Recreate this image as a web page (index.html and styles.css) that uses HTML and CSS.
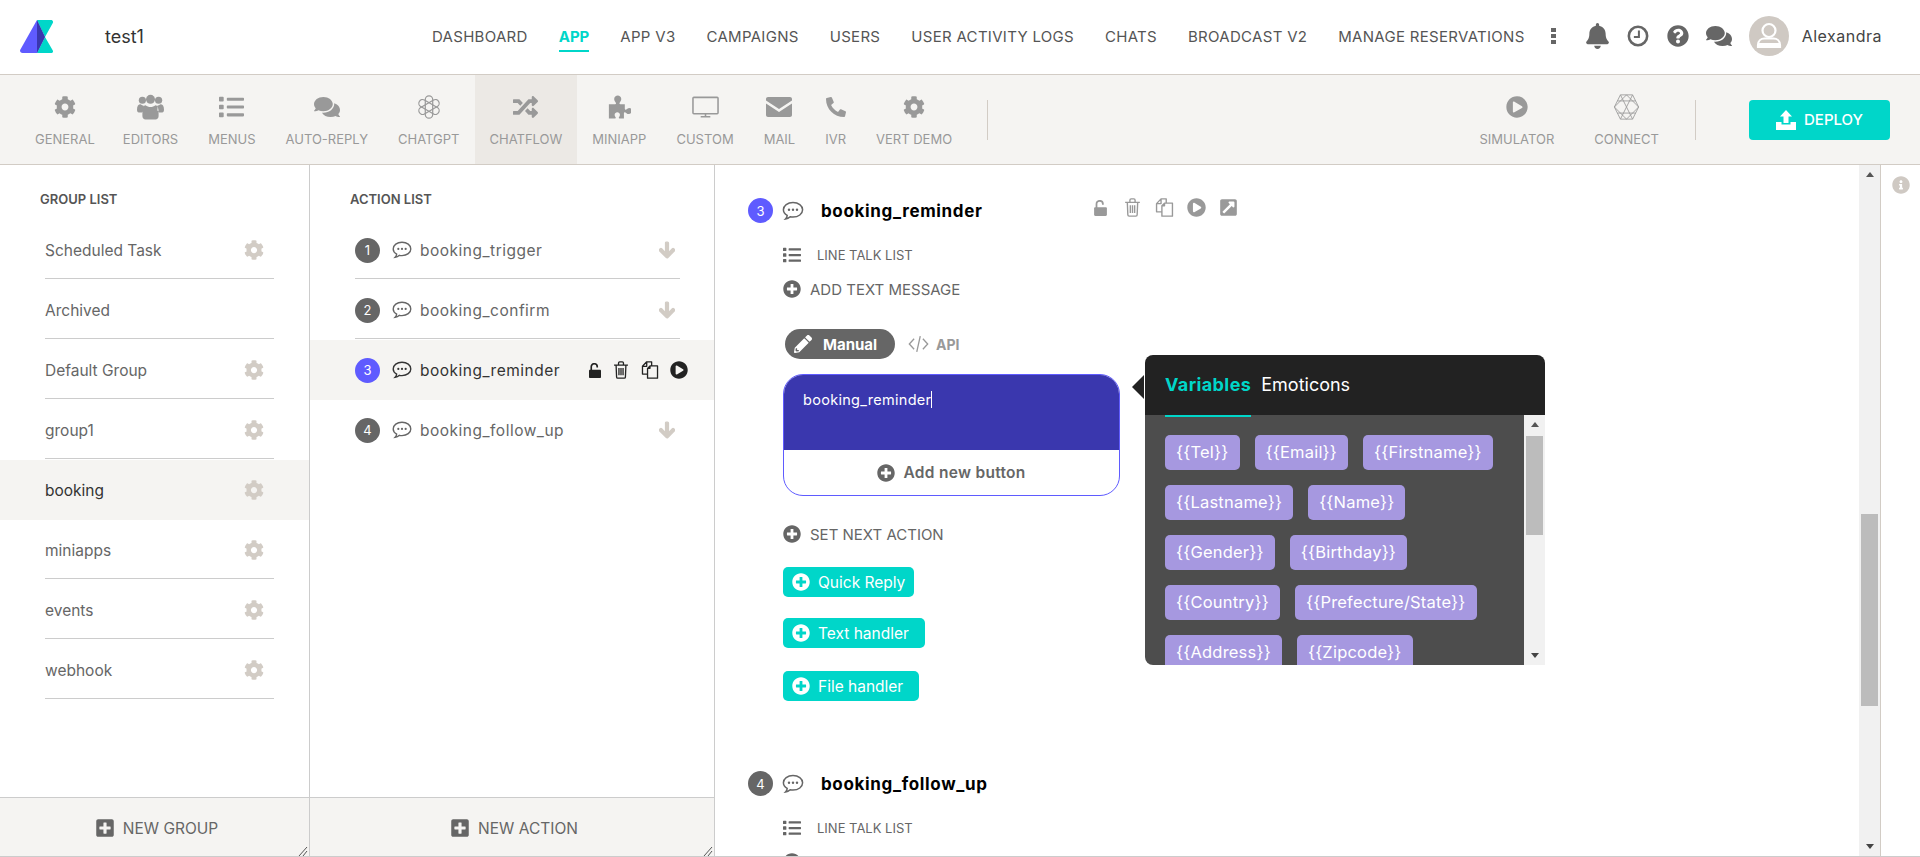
FILE: index.html
```html
<!DOCTYPE html>
<html>
<head>
<meta charset="utf-8" />
<title>Chatflow</title>
<link rel="stylesheet" href="styles.css">
</head>
<body>
<svg class="defs" width="0" height="0">
  <symbol id="i-cog" viewBox="0 0 512 512"><path d="M487.4 315.7l-42.6-24.6c4.3-23.2 4.3-47 0-70.2l42.6-24.6c4.9-2.8 7.1-8.6 5.5-14-11.1-35.6-30-67.8-54.7-94.6-3.8-4.1-10-5.1-14.8-2.3L380.8 110c-17.9-15.4-38.5-27.3-60.8-35.1V25.8c0-5.6-3.9-10.5-9.4-11.7-36.7-8.2-74.3-7.8-109.2 0-5.5 1.2-9.4 6.1-9.4 11.7V75c-22.2 7.9-42.8 19.8-60.8 35.1L88.7 85.5c-4.9-2.8-11-1.9-14.8 2.3-24.7 26.7-43.6 58.9-54.7 94.6-1.7 5.4.6 11.2 5.5 14L67.3 221c-4.3 23.2-4.3 47 0 70.2l-42.6 24.6c-4.9 2.8-7.1 8.6-5.5 14 11.1 35.6 30 67.8 54.7 94.6 3.8 4.1 10 5.1 14.8 2.3l42.6-24.6c17.9 15.4 38.5 27.3 60.8 35.1v49.2c0 5.6 3.9 10.5 9.4 11.7 36.7 8.2 74.3 7.8 109.2 0 5.5-1.2 9.4-6.1 9.4-11.7v-49.2c22.2-7.9 42.8-19.8 60.8-35.1l42.6 24.6c4.9 2.8 11 1.9 14.8-2.3 24.7-26.7 43.6-58.9 54.7-94.6 1.5-5.5-.7-11.3-5.6-14.1zM256 336c-44.1 0-80-35.9-80-80s35.9-80 80-80 80 35.9 80 80-35.9 80-80 80z"/></symbol>
  <symbol id="i-plus" viewBox="0 0 512 512"><path d="M256 8C119 8 8 119 8 256s111 248 248 248 248-111 248-248S393 8 256 8zm144 276c0 6.6-5.4 12-12 12h-92v92c0 6.6-5.4 12-12 12h-56c-6.6 0-12-5.4-12-12v-92h-92c-6.6 0-12-5.4-12-12v-56c0-6.6 5.4-12 12-12h92v-92c0-6.6 5.4-12 12-12h56c6.6 0 12 5.4 12 12v92h92c6.6 0 12 5.4 12 12v56z"/></symbol>
  <symbol id="i-plus-sq" viewBox="0 0 448 512"><path d="M400 32H48C21.5 32 0 53.5 0 80v352c0 26.5 21.5 48 48 48h352c26.5 0 48-21.5 48-48V80c0-26.5-21.5-48-48-48zm-32 252c0 6.6-5.4 12-12 12h-92v92c0 6.6-5.4 12-12 12h-56c-6.6 0-12-5.4-12-12v-92H92c-6.6 0-12-5.4-12-12v-56c0-6.6 5.4-12 12-12h92v-92c0-6.6 5.4-12 12-12h56c6.6 0 12 5.4 12 12v92h92c6.6 0 12 5.4 12 12v56z"/></symbol>
  <symbol id="i-help" viewBox="0 0 512 512"><path d="M504 256c0 136.997-111.043 248-248 248S8 392.997 8 256C8 119.083 119.043 8 256 8s248 111.083 248 248zM262.655 90c-54.497 0-89.255 22.957-116.549 63.758-3.536 5.286-2.353 12.415 2.715 16.258l34.699 26.31c5.205 3.947 12.621 3.008 16.665-2.122 17.864-22.658 30.113-35.797 57.303-35.797 20.429 0 45.698 13.148 45.698 32.958 0 14.976-12.363 22.667-32.534 33.976C247.128 238.528 216 254.941 216 296v4c0 6.627 5.373 12 12 12h56c6.627 0 12-5.373 12-12v-1.333c0-28.462 83.186-29.647 83.186-106.667 0-58.002-60.165-102-116.531-102zM256 338c-25.365 0-46 20.635-46 46 0 25.364 20.635 46 46 46s46-20.636 46-46c0-25.365-20.635-46-46-46z"/></symbol>
  <symbol id="i-play" viewBox="0 0 512 512"><path d="M256 8C119 8 8 119 8 256s111 248 248 248 248-111 248-248S393 8 256 8zm115.7 272l-176 101c-15.8 8.8-35.7-2.5-35.7-21V152c0-18.4 19.8-29.8 35.7-21l176 107c16.4 9.2 16.4 32.9 0 42z"/></symbol>
  <symbol id="i-bell" viewBox="0 0 448 512"><path d="M224 512c35.32 0 63.97-28.65 63.97-64H160.03c0 35.35 28.65 64 63.97 64zm215.39-149.71c-19.32-20.76-55.47-51.99-55.47-154.29 0-77.7-54.48-139.9-127.94-155.16V32c0-17.67-14.32-32-31.98-32s-31.98 14.33-31.98 32v20.84C118.56 68.1 64.08 130.3 64.08 208c0 102.3-36.15 133.53-55.47 154.29-6 6.45-8.66 14.16-8.61 21.71.11 16.4 12.98 32 32.1 32h383.8c19.12 0 32-15.6 32.1-32 .05-7.55-2.61-15.27-8.61-21.71z"/></symbol>
  <symbol id="i-comments" viewBox="0 0 576 512"><path d="M416 192c0-88.4-93.1-160-208-160S0 103.6 0 192c0 34.3 14.1 65.9 38 92-13.4 30.2-35.5 54.2-35.8 54.5-2.2 2.3-2.8 5.7-1.5 8.7S4.8 352 8 352c36.6 0 66.9-12.3 88.7-25 32.2 15.7 70.3 25 111.3 25 114.9 0 208-71.6 208-160zm122 220c23.9-26 38-57.7 38-92 0-66.9-53.5-124.2-129.3-148.1.9 6.6 1.3 13.3 1.3 20.1 0 105.9-107.7 192-240 192-10.8 0-21.3-.8-31.7-1.9C207.8 439.6 281.8 480 368 480c41 0 79.1-9.2 111.3-25 21.8 12.7 52.1 25 88.7 25 3.2 0 6.1-1.9 7.3-4.8 1.3-2.9.7-6.3-1.5-8.7-.3-.3-22.4-24.2-35.8-54.5z"/></symbol>
  <symbol id="i-list" viewBox="0 0 512 512"><path d="M80 368H16a16 16 0 0 0-16 16v64a16 16 0 0 0 16 16h64a16 16 0 0 0 16-16v-64a16 16 0 0 0-16-16zm0-320H16A16 16 0 0 0 0 64v64a16 16 0 0 0 16 16h64a16 16 0 0 0 16-16V64a16 16 0 0 0-16-16zm0 160H16a16 16 0 0 0-16 16v64a16 16 0 0 0 16 16h64a16 16 0 0 0 16-16v-64a16 16 0 0 0-16-16zm416 176H176a16 16 0 0 0-16 16v32a16 16 0 0 0 16 16h320a16 16 0 0 0 16-16v-32a16 16 0 0 0-16-16zm0-320H176a16 16 0 0 0-16 16v32a16 16 0 0 0 16 16h320a16 16 0 0 0 16-16V80a16 16 0 0 0-16-16zm0 160H176a16 16 0 0 0-16 16v32a16 16 0 0 0 16 16h320a16 16 0 0 0 16-16v-32a16 16 0 0 0-16-16z"/></symbol>
  <symbol id="i-random" viewBox="0 0 512 512"><path d="M504.971 359.029c9.373 9.373 9.373 24.569 0 33.941l-80 79.984c-15.01 15.01-40.971 4.49-40.971-16.971V416h-58.785a12.004 12.004 0 0 1-8.773-3.812l-70.556-75.596 53.333-57.143L352 336h32v-39.981c0-21.438 25.943-31.998 40.971-16.971l80 79.981zM12 176h84l52.781 56.551 53.333-57.143-70.556-75.596A11.999 11.999 0 0 0 122.785 96H12c-6.627 0-12 5.373-12 12v56c0 6.627 5.373 12 12 12zm372 0v39.984c0 21.46 25.961 31.98 40.971 16.971l80-79.984c9.373-9.373 9.373-24.569 0-33.941l-80-79.981C409.943 24.021 384 34.582 384 56.019V96h-58.785a12.004 12.004 0 0 0-8.773 3.812L96 336H12c-6.627 0-12 5.373-12 12v56c0 6.627 5.373 12 12 12h110.785c3.326 0 6.503-1.381 8.773-3.812L352 176h32z"/></symbol>
  <symbol id="i-phone" viewBox="0 0 512 512"><path transform="translate(512 0) scale(-1 1)" d="M493.4 24.6l-104-24c-11.3-2.6-22.9 3.3-27.5 13.9l-48 112c-4.2 9.8-1.4 21.3 6.9 28l60.6 49.6c-36 76.7-98.9 140.5-177.2 177.2l-49.6-60.6c-6.8-8.3-18.2-11.1-28-6.9l-112 48C3.9 366.5-2 378.1.6 389.4l24 104C27.1 504.2 36.7 512 48 512c256.1 0 464-207.5 464-464 0-11.2-7.7-20.9-18.6-23.4z"/></symbol>
  <symbol id="i-info" viewBox="0 0 512 512"><path d="M256 8C119.043 8 8 119.083 8 256c0 136.997 111.043 248 248 248s248-111.003 248-248C504 119.083 392.957 8 256 8zm0 110c23.196 0 42 18.804 42 42s-18.804 42-42 42-42-18.804-42-42 18.804-42 42-42zm56 254c0 6.627-5.373 12-12 12h-88c-6.627 0-12-5.373-12-12v-24c0-6.627 5.373-12 12-12h12v-64h-12c-6.627 0-12-5.373-12-12v-24c0-6.627 5.373-12 12-12h64c6.627 0 12 5.373 12 12v100h12c6.627 0 12 5.373 12 12v24z"/></symbol>
  <symbol id="i-down" viewBox="0 0 448 512"><path d="M413.1 222.5l22.2 22.2c9.4 9.4 9.4 24.6 0 33.9L241 473c-9.4 9.4-24.6 9.4-33.9 0L12.7 278.6c-9.4-9.4-9.4-24.6 0-33.9l22.2-22.2c9.5-9.5 25-9.3 34.3.4L184 343.4V56c0-13.3 10.7-24 24-24h32c13.3 0 24 10.7 24 24v287.4l114.8-120.5c9.3-9.8 24.8-10 34.3-.4z"/></symbol>
  <symbol id="i-ext" viewBox="0 0 448 512"><path d="M448 80v352c0 26.51-21.49 48-48 48H48c-26.51 0-48-21.49-48-48V80c0-26.51 21.49-48 48-48h352c26.51 0 48 21.49 48 48zm-88 16H248.029c-21.313 0-32.08 25.861-16.971 40.971l31.984 31.987L67.515 364.485c-4.686 4.686-4.686 12.284 0 16.971l31.029 31.029c4.687 4.686 12.285 4.686 16.971 0l195.526-195.526 31.988 31.991C357.058 263.977 384 253.425 384 231.979V120c0-13.255-10.745-24-24-24z"/></symbol>
  <symbol id="i-pencil" viewBox="0 0 512 512"><path d="M497.9 142.1l-46.1 46.1c-4.7 4.7-12.3 4.7-17 0l-111-111c-4.7-4.7-4.7-12.3 0-17l46.1-46.1c18.7-18.7 49.1-18.7 67.9 0l60.1 60.1c18.8 18.7 18.8 49.1 0 67.9zM284.2 99.8L21.6 362.4.4 483.9c-2.9 16.4 11.4 30.6 27.8 27.8l121.5-21.3 262.6-262.6c4.7-4.7 4.7-12.3 0-17l-111-111c-4.8-4.7-12.4-4.7-17.1 0zM88 424h48v36.3l-64.5 11.3-31.1-31.1L51.7 376H88v48z"/></symbol>
  <symbol id="i-chat" viewBox="0 0 24 24"><path fill="none" stroke="currentColor" stroke-width="1.5" d="M12 3.5c5.4 0 9.6 3.2 9.6 7.3s-4.2 7.3-9.6 7.3c-1 0-1.9-.1-2.8-.3-1.3 1.2-3 2-4.7 2.2 1-1 1.6-2.2 1.7-3.6-2.3-1.3-3.8-3.4-3.8-5.6 0-4.1 4.2-7.3 9.6-7.3z"/><circle cx="8" cy="10.8" r="1.2" fill="currentColor"/><circle cx="12" cy="10.8" r="1.2" fill="currentColor"/><circle cx="16" cy="10.8" r="1.2" fill="currentColor"/></symbol>
  <symbol id="i-trash" viewBox="0 0 20 22"><path fill="none" stroke="currentColor" stroke-width="1.6" d="M1.5 5h17M4 5l.6 14.5c0 .9.7 1.5 1.5 1.5h7.800c.8 0 1.500-.6 1.500-1.500L16 5M7 5V2.500C7 1.700 7.600 1 8.400 1h3.200c.8 0 1.400.7 1.400 1.500V5M7.500 8.500v9M10 8.500v9M12.500 8.500v9"/></symbol>
  <symbol id="i-copy" viewBox="0 0 22 22"><path fill="none" stroke="currentColor" stroke-width="1.600" stroke-linejoin="round" d="M8 16H1.800V6.500L7 1h6v5M8 16V9l3-3h9.200v15H8zM7 1v5.500H1.800M11 6v3H8"/></symbol>
  <symbol id="i-unlock" viewBox="0 0 16 20"><path d="M1.500 9h13c.8 0 1.500.7 1.500 1.500v8c0 .8-.7 1.500-1.500 1.500h-13C.7 20 0 19.300 0 18.500v-8C0 9.700.7 9 1.500 9z"/><path fill="none" stroke="currentColor" stroke-width="2.200" d="M3 10V5c0-2.300 1.700-4 4-4s4 1.700 4 4v1"/></symbol>
  <symbol id="i-code" viewBox="0 0 24 20"><path fill="none" stroke="currentColor" stroke-width="1.500" d="M7 4L1.500 10 7 16M17 4l5.500 6-5.500 6M14 1l-4 18"/></symbol>
  <symbol id="i-clock" viewBox="0 0 24 24"><circle cx="12" cy="12" r="10" fill="none" stroke="currentColor" stroke-width="2.800"/><path fill="none" stroke="currentColor" stroke-width="2.200" d="M13 6v7H7.500"/></symbol>
  <symbol id="i-users" viewBox="0 0 30 28"><circle cx="6" cy="6.500" r="4"/><circle cx="24" cy="6.500" r="4"/><circle cx="15" cy="5.500" r="5"/><path d="M0 17c0-4 1.500-6 4-6 1 1 2.500 1.500 3.500 1.500-.5 1.500-.5 3 0 5.500-1 .5-1.500 1-2 2H2c-1.300 0-2-1.300-2-3zM30 17c0-4-1.500-6-4-6-1 1-2.500 1.500-3.500 1.500.5 1.500.5 3 0 5.500 1 .5 1.500 1 2 2H28c1.300 0 2-1.300 2-3zM9.500 12c1.500 1.300 3.500 2 5.500 2s4-.7 5.500-2c2.500.3 3.500 3 3.500 8v4c0 2.200-1.500 4-3.500 4h-11C7.500 28 6 26.200 6 24v-4c0-5 1-7.700 3.500-8z"/></symbol>
  <symbol id="i-puzzle" viewBox="0 0 26 28"><path d="M1 11h7c1 0 1.300-.8.800-1.700C7.900 7.800 7 6.800 7 5c0-2.500 2-4 4-4s4 1.500 4 4c0 1.800-1 2.800-1.800 4.300-.5.900-.2 1.700.8 1.700h5v5c0 1 .8 1.300 1.700.8 1.200-.8 2-1.800 3.300-1.800 2 0 3 1.800 3 3.500S25 22 23 22c-1.300 0-2.100-1-3.300-1.800-.9-.5-1.700-.2-1.700.8v6h-5c-.8 0-1-.8-.6-1.500.5-1 1.100-1.500 1.100-2.800 0-1.700-1.500-2.700-3-2.700s-3 1-3 2.700c0 1.300.6 1.800 1.100 2.800.4.700.2 1.500-.6 1.500H1z"/></symbol>
  <symbol id="i-mail" viewBox="0 0 26 20"><path d="M2 0h22c1.100 0 2 .9 2 2v1.500L13 12 0 3.500V2C0 .9.900 0 2 0zM0 6.500L13 15l13-8.500V18c0 1.100-.9 2-2 2H2c-1.100 0-2-.9-2-2z"/></symbol>
  <symbol id="i-screen" viewBox="0 0 28 22"><path fill="none" stroke="currentColor" stroke-width="1.600" d="M2 1h24c.6 0 1 .4 1 1v15c0 .6-.4 1-1 1H2c-.6 0-1-.4-1-1V2c0-.6.4-1 1-1zM14 18v3M9 21.200h10"/></symbol>
  <symbol id="i-gpt" viewBox="0 0 28 28"><g fill="none" stroke="currentColor" stroke-width="1.300"><rect x="10" y="2" width="8" height="24" rx="4"/><rect x="10" y="2" width="8" height="24" rx="4" transform="rotate(60 14 14)"/><rect x="10" y="2" width="8" height="24" rx="4" transform="rotate(120 14 14)"/></g></symbol>
  <symbol id="i-connect" viewBox="0 0 30 30"><g fill="none" stroke="currentColor" stroke-width="1"><path d="M8 1h14l7 14-7 14H8L1 15z"/><path d="M8 1l14 28M22 1L8 29M1 15l14-14 14 14-14 14zM4.500 8h21M4.500 22h21"/></g></symbol>
  <symbol id="i-upload" viewBox="0 0 20 20"><path d="M10 0l6 6.500h-3.500V13h-5V6.500H4zM0 12h5.500v2.500h9V12H20v8H0z"/></symbol>
  <symbol id="i-user" viewBox="0 0 40 40"><circle cx="20" cy="14.500" r="6.500" fill="none" stroke="#fff" stroke-width="2.200"/><path fill="none" stroke="#fff" stroke-width="2.200" d="M9 32v-3c0-4 3-6.500 6.500-6.500h9c3.500 0 6.500 2.500 6.500 6.500v3"/><path fill="#fff" d="M9 27h22v5H9z"/></symbol>
  <symbol id="i-grip" viewBox="0 0 10 10"><path fill="none" stroke="#555" stroke-width="1" d="M1 10l8-9M5 10l4-5"/></symbol>
</svg>

<header class="topbar">
  <svg class="logo" viewBox="0 0 33 33" width="33" height="33">
    <path fill="#5f5bff" d="M17 0L.4 29.500C-.6 31.300.5 33 2.500 33H17l8-16z"/>
    <path fill="#00d6c9" d="M17 0h14c1.600 0 2.500 1.500 1.800 3L25 17l7.800 13.500c.7 1.200-.2 2.500-1.800 2.500H17l8-16z"/>
    <path fill="#3a37ae" d="M17 0l8 17-8 16z"/>
  </svg>
  <span class="app-name">test1</span>
  <nav class="topnav">
    <a>DASHBOARD</a><a class="on">APP</a><a>APP V3</a><a>CAMPAIGNS</a><a>USERS</a><a>USER ACTIVITY LOGS</a><a>CHATS</a><a>BROADCAST V2</a><a>MANAGE RESERVATIONS</a>
  </nav>
  <div class="kebab"><i></i><i></i><i></i></div>
  <svg class="ico-bell"><use href="#i-bell"/></svg>
  <svg class="ico-top"><use href="#i-clock"/></svg>
  <svg class="ico-top"><use href="#i-help"/></svg>
  <svg class="ico-chats"><use href="#i-comments"/></svg>
  <div class="avatar"><svg width="40" height="40"><use href="#i-user"/></svg></div>
  <span class="username">Alexandra</span>
</header>

<div class="toolbar">
  <a class="tab first"><svg class="w22"><use href="#i-cog"/></svg><span>GENERAL</span></a>
  <a class="tab"><svg class="w27"><use href="#i-users"/></svg><span>EDITORS</span></a>
  <a class="tab"><svg class="w25"><use href="#i-list"/></svg><span>MENUS</span></a>
  <a class="tab"><svg class="w26"><use href="#i-comments"/></svg><span>AUTO-REPLY</span></a>
  <a class="tab"><svg class="w26"><use href="#i-gpt"/></svg><span>CHATGPT</span></a>
  <a class="tab active"><svg class="w25"><use href="#i-random"/></svg><span>CHATFLOW</span></a>
  <a class="tab"><svg class="w23"><use href="#i-puzzle"/></svg><span>MINIAPP</span></a>
  <a class="tab"><svg class="w27"><use href="#i-screen"/></svg><span>CUSTOM</span></a>
  <a class="tab"><svg class="w26"><use href="#i-mail"/></svg><span>MAIL</span></a>
  <a class="tab"><svg class="w20"><use href="#i-phone"/></svg><span>IVR</span></a>
  <a class="tab"><svg class="w22"><use href="#i-cog"/></svg><span>VERT DEMO</span></a>
  <div class="vline"></div>
  <div class="tool-right">
    <a class="tab wide"><svg class="w22"><use href="#i-play"/></svg><span>SIMULATOR</span></a>
    <a class="tab wide"><svg class="w27"><use href="#i-connect"/></svg><span>CONNECT</span></a>
    <div class="vline"></div>
    <button class="deploy"><svg width="20" height="20"><use href="#i-upload"/></svg>DEPLOY</button>
  </div>
</div>

<div class="workspace">
  <section class="col col-group">
    <h4>GROUP LIST</h4>
    <ul class="rows">
      <li><span class="name">Scheduled Task</span><svg class="gear"><use href="#i-cog"/></svg></li>
      <li><span class="name">Archived</span></li>
      <li><span class="name">Default Group</span><svg class="gear"><use href="#i-cog"/></svg></li>
      <li><span class="name">group1</span><svg class="gear"><use href="#i-cog"/></svg></li>
      <li class="sel"><span class="name">booking</span><svg class="gear"><use href="#i-cog"/></svg></li>
      <li><span class="name">miniapps</span><svg class="gear"><use href="#i-cog"/></svg></li>
      <li><span class="name">events</span><svg class="gear"><use href="#i-cog"/></svg></li>
      <li><span class="name">webhook</span><svg class="gear"><use href="#i-cog"/></svg></li>
    </ul>
    <div class="col-foot"><svg width="18" height="20"><use href="#i-plus-sq"/></svg>NEW GROUP<svg class="grip"><use href="#i-grip"/></svg></div>
  </section>

  <section class="col col-action">
    <h4>ACTION LIST</h4>
    <ul class="rows">
      <li><b class="num">1</b><svg class="chat"><use href="#i-chat"/></svg><span class="name">booking_trigger</span><svg class="arrow"><use href="#i-down"/></svg></li>
      <li><b class="num">2</b><svg class="chat"><use href="#i-chat"/></svg><span class="name">booking_confirm</span><svg class="arrow"><use href="#i-down"/></svg></li>
      <li class="sel"><b class="num cur">3</b><svg class="chat"><use href="#i-chat"/></svg><span class="name">booking_reminder</span>
        <span class="row-tools">
          <svg class="rt-lock"><use href="#i-unlock"/></svg><svg class="rt"><use href="#i-trash"/></svg><svg class="rt"><use href="#i-copy"/></svg><svg class="rt"><use href="#i-play"/></svg>
        </span>
      </li>
      <li><b class="num">4</b><svg class="chat"><use href="#i-chat"/></svg><span class="name">booking_follow_up</span><svg class="arrow"><use href="#i-down"/></svg></li>
    </ul>
    <div class="col-foot"><svg width="18" height="20"><use href="#i-plus-sq"/></svg>NEW ACTION<svg class="grip"><use href="#i-grip"/></svg></div>
  </section>

  <main class="main">
    <div class="canvas">
      <div class="block-head">
        <b class="num cur">3</b><svg class="chat big"><use href="#i-chat"/></svg><span class="title">booking_reminder</span>
        <span class="head-tools">
          <svg class="ht-lock"><use href="#i-unlock"/></svg><svg class="ht"><use href="#i-trash"/></svg><svg class="ht"><use href="#i-copy"/></svg><svg class="ht"><use href="#i-play"/></svg><svg class="ht"><use href="#i-ext"/></svg>
        </span>
      </div>
      <div class="talk-list"><svg width="18" height="18"><use href="#i-list"/></svg>LINE TALK LIST</div>
      <div class="add-line"><svg width="18" height="18"><use href="#i-plus"/></svg>ADD TEXT MESSAGE</div>
      <div class="mode">
        <span class="pill"><svg width="18" height="18"><use href="#i-pencil"/></svg>Manual</span>
        <span class="api"><svg width="21" height="18"><use href="#i-code"/></svg>API</span>
      </div>
      <div class="editor">
        <div class="bubble"><span class="typed">booking_reminder</span></div>
        <div class="add-btn"><svg width="18" height="18"><use href="#i-plus"/></svg>Add new button</div>
      </div>
      <div class="add-line next"><svg width="18" height="18"><use href="#i-plus"/></svg>SET NEXT ACTION</div>
      <a class="teal qr"><svg width="18" height="18"><use href="#i-plus"/></svg>Quick Reply</a>
      <a class="teal th"><svg width="18" height="18"><use href="#i-plus"/></svg>Text handler</a>
      <a class="teal fh"><svg width="18" height="18"><use href="#i-plus"/></svg>File handler</a>

      <div class="block-head second">
        <b class="num">4</b><svg class="chat big"><use href="#i-chat"/></svg><span class="title">booking_follow_up</span>
      </div>
      <div class="talk-list"><svg width="18" height="18"><use href="#i-list"/></svg>LINE TALK LIST</div>
      <div class="add-line"><svg width="18" height="18"><use href="#i-plus"/></svg></div>

      <div class="popover">
        <div class="pop-head">
          <span class="pop-tab on">Variables</span><span class="pop-tab">Emoticons</span>
        </div>
        <div class="pop-body">
          <div class="chips">
            <span>{{Tel}}</span><span>{{Email}}</span><span>{{Firstname}}</span><span>{{Lastname}}</span><span>{{Name}}</span><span>{{Gender}}</span><span>{{Birthday}}</span><span>{{Country}}</span><span>{{Prefecture/State}}</span><span>{{Address}}</span><span>{{Zipcode}}</span>
          </div>
          <div class="pop-bar"><i class="up"></i><i class="thumb"></i><i class="dn"></i></div>
        </div>
      </div>
    </div>
    <div class="main-bar"><i class="up"></i><i class="thumb"></i><i class="dn"></i></div>
  </main>

  <aside class="side"><svg width="18" height="18"><use href="#i-info"/></svg></aside>
</div>
</body>
</html>
```

FILE: styles.css
```css
* {
    box-sizing: border-box;
}
html, body {
    margin: 0;
    height: 100%;
    overflow: hidden;
}
body {
    display: flex;
    flex-direction: column;
    font-family: "Inter", "Noto Sans", sans-serif;
    color: #666;
    background: #fff;
}
svg {
    fill: currentColor;
    flex: none;
    display: block;
}
.defs {
    position: absolute;
}
ul {
    list-style: none;
    margin: 0;
    padding: 0;
}

/* top bar */
.topbar {
    height: 75px;
    flex: none;
    display: flex;
    align-items: center;
    padding: 0 38px 2px 20px;
    border-bottom: 1px solid #d2ccc5;
}
.app-name {
    margin-left: 52px;
    font-size: 18px;
    color: #333;
}
.topnav {
    margin-left: auto;
    margin-top: 2px;
    display: flex;
    gap: 31px;
    font-size: 15px;
    letter-spacing: .3px;
    color: #555;
}
.topnav a {
    padding: 5px 0 4px;
    border-bottom: 2px solid transparent;
}
.topnav a.on {
    color: #00d6c9;
    font-weight: 700;
    letter-spacing: 0;
    border-bottom-color: #00d6c9;
}
.kebab {
    margin-left: 26px;
    display: flex;
    flex-direction: column;
    gap: 2px;
    width: 5px;
}
.kebab i {
    height: 4px;
    background: #666;
    display: block;
}
.ico-bell {
    width: 23px;
    height: 26px;
    margin-left: 30px;
}
.ico-top {
    width: 22px;
    height: 22px;
    margin-left: 18px;
}
.ico-chats {
    width: 26px;
    height: 24px;
    margin-left: 17px;
}
.avatar {
    width: 40px;
    height: 40px;
    border-radius: 50%;
    overflow: hidden;
    background: #cfc9c3;
    margin-left: 17px;
}
.username {
    margin-left: 13px;
    font-size: 16px;
    letter-spacing: .5px;
    color: #444;
}

/* app toolbar */
.toolbar {
    height: 90px;
    flex: none;
    display: flex;
    align-items: center;
    padding-left: 20px;
    background: #f5f4f2;
    border-bottom: 1px solid #d2ccc5;
    color: #999;
}
.tab {
    height: 89px;
    padding: 0 15px;
    display: flex;
    flex-direction: column;
    align-items: center;
    font-size: 13px;
    color: #999;
}
.tab.first {
    margin-right: -2px;
}
.tab svg {
    height: 26px;
    margin-top: 19px;
}
.tab span {
    margin-top: auto;
    padding-bottom: 17px;
}
.tab.active {
    background: #ece9e5;
}
.w20 { width: 20px; }
.w22 { width: 22px; }
.w23 { width: 23px; }
.w25 { width: 25px; }
.w26 { width: 26px; }
.w27 { width: 27px; }
.vline {
    width: 1px;
    height: 40px;
    background: #d2ccc5;
    margin-left: 20px;
}
.tool-right {
    margin-left: auto;
    display: flex;
    align-items: center;
    padding-right: 30px;
}
.tab.wide {
    padding: 0 20px;
}
.tool-right .vline {
    margin-left: 16px;
}
.deploy {
    width: 141px;
    height: 40px;
    margin-left: 53px;
    background: #00d6c9;
    color: #fff;
    border: 0;
    border-radius: 4px;
    font: 500 15px "Inter", sans-serif;
    display: flex;
    align-items: center;
    justify-content: center;
    gap: 8px;
}

/* panels */
.workspace {
    flex: 1;
    min-height: 0;
    display: flex;
    border-bottom: 1px solid #ccc;
}
.col {
    display: flex;
    flex-direction: column;
    border-right: 1px solid #ccc;
    position: relative;
}
.col-group {
    width: 310px;
    flex: none;
}
.col-action {
    width: 405px;
    flex: none;
}
.col h4 {
    margin: 0;
    padding: 26px 0 0 40px;
    font-size: 13px;
    font-weight: 600;
    line-height: 17px;
    height: 55px;
    color: #555;
}
.rows {
    flex: 1;
}
.rows li {
    height: 60px;
    padding: 0 35px 0 45px;
    display: flex;
    align-items: center;
    position: relative;
    font-size: 15.5px;
    color: #666;
}
.rows li::after {
    content: "";
    position: absolute;
    left: 45px;
    right: 35px;
    bottom: 1px;
    border-bottom: 1px solid #ccc;
}
.rows li.sel {
    background: #f5f4f2;
    color: #333;
}
.rows li.sel::after,
.col-action .rows li:last-child::after {
    display: none;
}
.gear {
    width: 20px;
    height: 20px;
    margin-left: auto;
    margin-right: 10px;
    color: #d2ccc5;
}
.col-action .rows li {
    padding: 0 34px 0 45px;
    letter-spacing: .5px;
}
.col-action .rows li::after {
    right: 34px;
}
.num {
    width: 25px;
    height: 25px;
    border-radius: 50%;
    background: #666;
    color: #fff;
    font-size: 13px;
    font-weight: 400;
    letter-spacing: 0;
    display: flex;
    align-items: center;
    justify-content: center;
    flex: none;
}
.num.cur {
    background: #5f5bff;
}
.chat {
    width: 22px;
    height: 22px;
    margin: 0 7px 0 11px;
    color: #666;
}
.sel .chat {
    color: #333;
}
.arrow {
    width: 16px;
    height: 18px;
    margin-left: auto;
    margin-right: 5px;
    color: #d2ccc5;
    stroke: currentColor;
    stroke-width: 40px;
}
.row-tools {
    margin-left: auto;
    margin-right: -8px;
    display: flex;
    align-items: center;
    gap: 11px;
    color: #222;
}
.rt-lock {
    width: 12px;
    height: 15px;
}
.rt {
    width: 18px;
    height: 18px;
}
.col-foot {
    height: 59px;
    flex: none;
    background: #f5f4f2;
    border-top: 1px solid #ccc;
    display: flex;
    align-items: center;
    justify-content: center;
    gap: 9px;
    padding: 2px 0 0 5px;
    font-size: 15.5px;
    color: #666;
    position: relative;
}
.grip {
    position: absolute;
    right: 1px;
    bottom: 0;
    width: 10px;
    height: 10px;
}

/* main canvas */
.main {
    flex: 1;
    min-width: 0;
    display: flex;
}
.canvas {
    flex: 1;
    position: relative;
    overflow: hidden;
    padding: 33px 0 0 68px;
}
.block-head {
    height: 25px;
    margin-left: -35px;
    display: flex;
    align-items: center;
}
.block-head.second {
    margin-top: 70px;
}
.chat.big {
    width: 24px;
    height: 24px;
    margin: 0 16px 0 8px;
}
.title {
    font-size: 17px;
    font-weight: 700;
    color: #000;
    letter-spacing: .65px;
}
.head-tools {
    margin-left: 111px;
    margin-top: -6px;
    display: flex;
    align-items: center;
    gap: 13px;
    color: #999;
}
.ht-lock {
    width: 13px;
    height: 16px;
    margin-right: 3px;
}
.ht {
    width: 19px;
    height: 19px;
}
.talk-list {
    margin-top: 22px;
    height: 20px;
    display: flex;
    align-items: center;
    gap: 16px;
    font-size: 13px;
    color: #666;
}
.add-line {
    margin-top: 14px;
    height: 20px;
    display: flex;
    align-items: center;
    gap: 9px;
    font-size: 15px;
    color: #666;
}
.mode {
    margin-top: 30px;
    height: 30px;
    display: flex;
    align-items: center;
    padding-left: 2px;
}
.pill {
    width: 110px;
    height: 30px;
    border-radius: 15px;
    background: #666;
    color: #fff;
    font-size: 15px;
    font-weight: 700;
    display: flex;
    align-items: center;
    gap: 11px;
    padding-left: 9px;
}
.api {
    margin-left: 13px;
    display: flex;
    align-items: center;
    gap: 7px;
    font-size: 14px;
    font-weight: 700;
    color: #999;
}
.editor {
    width: 337px;
    height: 122px;
    margin-top: 15px;
    border: 1px solid #5f5bff;
    border-radius: 20px;
    overflow: hidden;
}
.bubble {
    height: 75px;
    background: #3a37ae;
    padding: 14px 19px;
    font-size: 14.5px;
    letter-spacing: .3px;
    line-height: 22px;
    color: #fff;
}
.typed {
    border-right: 1px solid #fff;
}
.add-btn {
    height: 45px;
    display: flex;
    align-items: center;
    justify-content: center;
    gap: 8px;
    font-size: 15.5px;
    letter-spacing: .3px;
    font-weight: 600;
    color: #666;
}
.add-line.next {
    margin-top: 28px;
}
.teal {
    height: 30px;
    width: fit-content;
    display: flex;
    align-items: center;
    gap: 8px;
    padding-left: 9px;
    background: #00d6c9;
    color: #fff;
    font-size: 15.5px;
    border-radius: 5px;
}
.qr {
    margin-top: 23px;
    width: 131px;
}
.th {
    margin-top: 21px;
    width: 142px;
}
.fh {
    margin-top: 23px;
    width: 136px;
}

/* variables popover */
.popover {
    position: absolute;
    left: 430px;
    top: 190px;
    width: 400px;
    height: 310px;
    border-radius: 8px;
    display: flex;
    flex-direction: column;
}
.popover::before {
    content: "";
    position: absolute;
    left: -13px;
    top: 20px;
    border: solid transparent;
    border-width: 12px 12px 12px 0;
    border-right-color: #222;
}
.pop-head {
    height: 60px;
    flex: none;
    background: #222;
    border-radius: 8px 8px 0 0;
    display: flex;
    padding-left: 20px;
    gap: 10px;
}
.pop-tab {
    font-size: 18px;
    line-height: 59px;
    color: #fff;
    height: 62px;
    position: relative;
    z-index: 1;
}
.pop-tab.on {
    color: #00d6c9;
    font-weight: 700;
    letter-spacing: .4px;
    border-bottom: 2px solid #00d6c9;
}
.pop-body {
    flex: 1;
    min-height: 0;
    display: flex;
    background: #4d4d4d;
    border-radius: 0 0 0 8px;
    overflow: hidden;
}
.chips {
    flex: 1;
    display: flex;
    flex-wrap: wrap;
    align-content: flex-start;
    gap: 15px;
    padding: 20px 20px 0;
}
.chips span {
    height: 35px;
    padding: 0 11px;
    background: #a698e0;
    color: #fff;
    border-radius: 5px;
    font-size: 16.5px;
    letter-spacing: .2px;
    line-height: 34px;
}
.pop-bar, .main-bar {
    flex: none;
    width: 21px;
    background: #f1f1f1;
    display: flex;
    flex-direction: column;
    align-items: center;
}
.pop-bar i, .main-bar i {
    display: block;
}
.up {
    margin-top: 7px;
    border: solid transparent;
    border-width: 0 4.5px 5px;
    border-bottom-color: #555;
}
.dn {
    margin-top: auto;
    margin-bottom: 7px;
    border: solid transparent;
    border-width: 5px 4.5px 0;
    border-top-color: #444;
}
.pop-bar .thumb {
    width: 17px;
    height: 99px;
    margin-top: 9px;
    background: #bcbcbc;
}
.main-bar {
    border-right: 1px solid #d2ccc5;
    width: 22px;
}
.main-bar .thumb {
    width: 17px;
    height: 192px;
    margin-top: 337px;
    background: #bcbcbc;
}
.side {
    width: 39px;
    flex: none;
    padding: 11px 0 0 11px;
    color: #cfc9c3;
}
```
